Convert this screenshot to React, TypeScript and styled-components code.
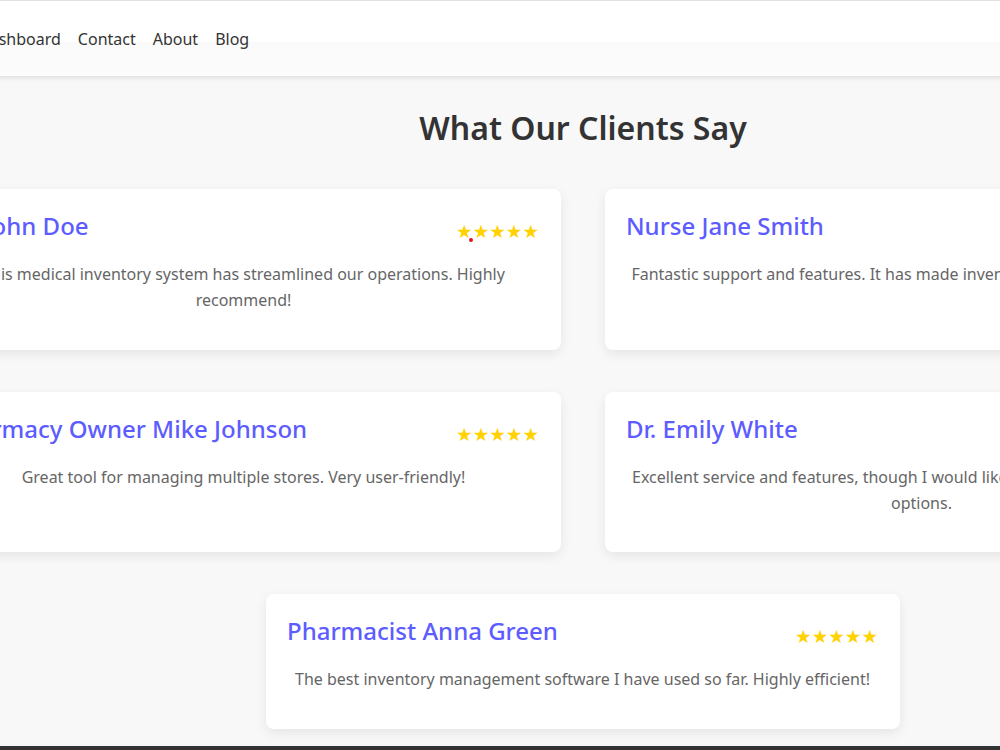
import React from "react";
import styled, { createGlobalStyle } from "styled-components";

const GlobalStyle = createGlobalStyle`
  html, body {
    margin: 0;
    padding: 0;
    overflow-x: hidden;
    background: #f8f8f8;
  }
  body {
    font-family: "Noto Sans", "Open Sans", sans-serif;
    color: #333;
  }
`;

const Page = styled.div`
  width: 1312px;
  margin-left: -73px;
`;

const Header = styled.header`
  height: 76px;
  box-sizing: border-box;
  border-top: 1px solid #e2e2e2;
  background: linear-gradient(#ffffff 0, #ffffff 41px, #fafafa 41px, #fcfcfc 100%);
  box-shadow: 0 2px 5px rgba(0, 0, 0, 0.1);
  display: flex;
  align-items: center;
  padding-left: 51px;
  gap: 17px;
`;

const NavLink = styled.a`
  font-size: 16px;
  color: #333;
  text-decoration: none;
`;

const Section = styled.section`
  padding: 33px 0 17px;
`;

const Title = styled.h2`
  margin: 0 0 42px;
  text-align: center;
  font-size: 32px;
  line-height: 38px;
  font-weight: 600;
  color: #333;
`;

const Grid = styled.div`
  display: flex;
  flex-wrap: wrap;
  justify-content: center;
  gap: 42px 44px;
`;

const Card = styled.div`
  width: 634px;
  box-sizing: border-box;
  background: #fff;
  border-radius: 8px;
  box-shadow: 0 4px 12px rgba(0, 0, 0, 0.08);
  padding: 22px 22px 22px 21px;
`;

const CardHead = styled.div`
  display: flex;
  justify-content: space-between;
  align-items: baseline;
  margin-bottom: 21px;
`;

const Name = styled.h3`
  margin: 0;
  font-size: 24px;
  line-height: 29px;
  font-weight: 500;
  color: #5c5cff;
`;

const Stars = styled.span<{ $marked?: boolean }>`
  position: relative;
  top: 3px;
  font-family: "DejaVu Sans", sans-serif;
  font-size: 18.5px;
  color: #ffd200;
  &::after {
    content: "";
    display: ${(p) => (p.$marked ? "block" : "none")};
    position: absolute;
    left: 13px;
    top: 17px;
    width: 4px;
    height: 4px;
    border-radius: 50%;
    background: #e8141c;
  }
`;

const Quote = styled.p`
  margin: 0 0 14.5px;
  font-size: 16px;
  line-height: 26px;
  color: #666;
  text-align: center;
`;

const Footer = styled.footer`
  height: 200px;
  background: #333;
`;

const testimonials = [
  {
    name: "Dr. John Doe",
    text: "This medical inventory system has streamlined our operations. Highly recommend!",
    marked: true,
  },
  {
    name: "Nurse Jane Smith",
    text: "Fantastic support and features. It has made inventory management a breeze.",
  },
  {
    name: "Pharmacy Owner Mike Johnson",
    text: "Great tool for managing multiple stores. Very user-friendly!",
  },
  {
    name: "Dr. Emily White",
    text: "Excellent service and features, though I would like to see more customization options.",
  },
  {
    name: "Pharmacist Anna Green",
    text: "The best inventory management software I have used so far. Highly efficient!",
  },
];

export default function App() {
  return (
    <>
      <GlobalStyle />
      <Page>
        <Header>
          <NavLink href="#">Dashboard</NavLink>
          <NavLink href="#">Contact</NavLink>
          <NavLink href="#">About</NavLink>
          <NavLink href="#">Blog</NavLink>
        </Header>
        <Section>
          <Title>What Our Clients Say</Title>
          <Grid>
            {testimonials.map((t) => (
              <Card key={t.name}>
                <CardHead>
                  <Name>{t.name}</Name>
                  <Stars $marked={t.marked}>★★★★★</Stars>
                </CardHead>
                <Quote>{t.text}</Quote>
              </Card>
            ))}
          </Grid>
        </Section>
        <Footer />
      </Page>
    </>
  );
}
